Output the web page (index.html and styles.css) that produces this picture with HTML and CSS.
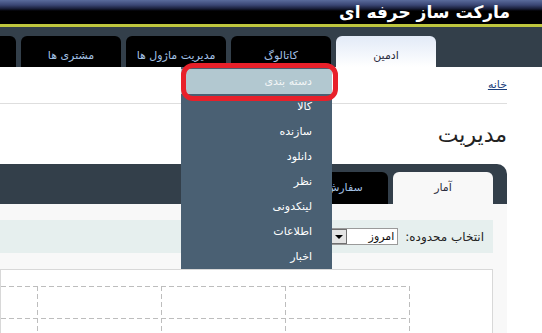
FILE: index.html
```html
<!DOCTYPE html>
<html lang="fa" dir="rtl">
<head>
<meta charset="utf-8">
<title>مارکت ساز حرفه ای</title>
<link rel="stylesheet" href="styles.css">
</head>
<body>
<div class="header"><div class="title">مارکت ساز حرفه ای</div></div>
<div class="rule"></div>
<ul class="nav">
  <li class="tab active">ادمین</li>
  <li class="tab has-menu">کاتالوگ
    <ul class="menu">
      <li class="item hi">دسته بندی</li>
      <li class="item">کالا</li>
      <li class="item">سازنده</li>
      <li class="item">دانلود</li>
      <li class="item">نظر</li>
      <li class="item">لینکدونی</li>
      <li class="item">اطلاعات</li>
      <li class="item">اخبار</li>
      <li class="ring"></li>
    </ul>
  </li>
  <li class="tab">مدیریت ماژول ها</li>
  <li class="tab">مشتری ها</li>
  <li class="tab"></li>
</ul>
<div class="main">
  <div class="crumb"><a href="#">خانه</a></div>
  <h1 class="heading">مدیریت</h1>
  <div class="panel">
    <div class="ptabs">
      <div class="ptab active">آمار</div>
      <div class="ptab">سفارش ها</div>
    </div>
    <div class="pbody">
      <div class="filter">
        <span class="flabel">انتخاب محدوده:</span>
        <span class="select"><span class="sval">امروز</span><span class="sbtn"><span class="tri"></span></span></span>
      </div>
      <div class="chart">
        <svg class="grid" width="491" height="70" viewBox="0 0 491 70">
          <g stroke="#bdbdbd" stroke-width="1" stroke-dasharray="5 3" fill="none">
            <line x1="0" y1="16.5" x2="408" y2="16.5"/>
            <line x1="0" y1="48.5" x2="408" y2="48.5"/>
            <line x1="36.5" y1="16" x2="36.5" y2="70"/>
            <line x1="160.5" y1="16" x2="160.5" y2="70"/>
            <line x1="284.5" y1="16" x2="284.5" y2="70"/>
            <line x1="408.5" y1="16" x2="408.5" y2="70"/>
          </g>
        </svg>
      </div>
    </div>
  </div>
</div>
</body>
</html>
```
FILE: styles.css
```css
html, body {
  margin: 0;
  padding: 0;
  width: 542px;
  height: 333px;
  overflow: hidden;
  background: #ffffff;
  font-family: "DejaVu Sans", "Liberation Sans", sans-serif;
}
.header {
  height: 24px;
  background: linear-gradient(to bottom, #5a6b9c 0, #3a4674 5px, #161b34 9px, #000 11px, #000 100%);
  display: flex;
  padding-right: 32px;
}
.title {
  color: #ffffff;
  font-weight: bold;
  font-size: 17px;
  line-height: 24px;
  white-space: nowrap;
}
.rule {
  height: 3px;
  background: #bec63e;
}
.nav {
  list-style: none;
  margin: 0;
  height: 40px;
  background: #333f4a;
  display: flex;
  align-items: flex-end;
  gap: 5px;
  padding: 0 106px 0 0;
  white-space: nowrap;
}
.tab {
  flex: none;
  width: 100px;
  height: 31px;
  box-sizing: border-box;
  padding-top: 12px;
  line-height: 16px;
  text-align: center;
  font-size: 11px;
  color: #a4c2e6;
  background: #000;
  border-radius: 6px 6px 0 0;
}
.tab.active {
  background: linear-gradient(to bottom, #e2eaf7, #ffffff);
  color: #2c2c3c;
}
.has-menu {
  position: relative;
}
.menu {
  position: absolute;
  top: 31px;
  right: -1px;
  width: 151px;
  list-style: none;
  margin: 0;
  padding: 2px 0 0 0;
  background: #4a6073;
  z-index: 10;
}
.item {
  height: 25px;
  line-height: 25px;
  padding-right: 20px;
  text-align: right;
  color: #ffffff;
  font-size: 11px;
}
.item.hi {
  background: #b2c8d0;
  color: #f2f6f7;
}
.ring {
  position: absolute;
  top: -4px;
  left: 0;
  width: 157px;
  height: 38px;
  box-sizing: border-box;
  border: 5px solid #e8202a;
  border-radius: 12px;
}
.main {
  margin-right: 35px;
}
.crumb {
  height: 36px;
  line-height: 36px;
  border-bottom: 1px solid #dedede;
  font-size: 11px;
}
.crumb a {
  color: #1b3f7c;
  text-decoration: underline;
}
.heading {
  margin: 16px 0 14px 0;
  font-size: 22px;
  line-height: 30px;
  font-weight: normal;
  color: #222;
}
.panel {
  background: #333f4a;
  border-top-right-radius: 10px;
  padding-top: 8px;
}
.ptabs {
  display: flex;
  gap: 5px;
  padding-right: 14px;
}
.ptab {
  width: 100px;
  height: 32px;
  line-height: 32px;
  text-align: center;
  font-size: 11px;
  color: #a4c2e6;
  background: #000;
  border-radius: 6px 6px 0 0;
}
.ptab.active {
  background: #f8f8f8;
  color: #2c2c3c;
}
.pbody {
  background: #f8f8f8;
  padding: 16px 14px 0 0;
  height: 200px;
}
.filter {
  height: 33px;
  background: #e6efee;
  display: flex;
  align-items: center;
  gap: 7px;
  padding-right: 9px;
}
.flabel {
  font-size: 12px;
  color: #222;
}
.select {
  width: 69px;
  height: 17px;
  box-sizing: border-box;
  border: 1px solid #9a9a9a;
  background: #fff;
  display: flex;
  align-items: center;
  justify-content: space-between;
  font-size: 11px;
  color: #111;
}
.sval {
  padding-right: 3px;
  line-height: 15px;
}
.sbtn {
  width: 17px;
  height: 15px;
  box-sizing: border-box;
  border: 1px solid #707070;
  background: #e4e4e4;
  display: flex;
  align-items: center;
  justify-content: center;
}
.tri {
  width: 0;
  height: 0;
  border-left: 4px solid transparent;
  border-right: 4px solid transparent;
  border-top: 4px solid #000;
}
.chart {
  margin-top: 16px;
  background: #fff;
  border: 1px solid #d8d8d8;
  height: 100px;
}
.grid {
  display: block;
}
```
